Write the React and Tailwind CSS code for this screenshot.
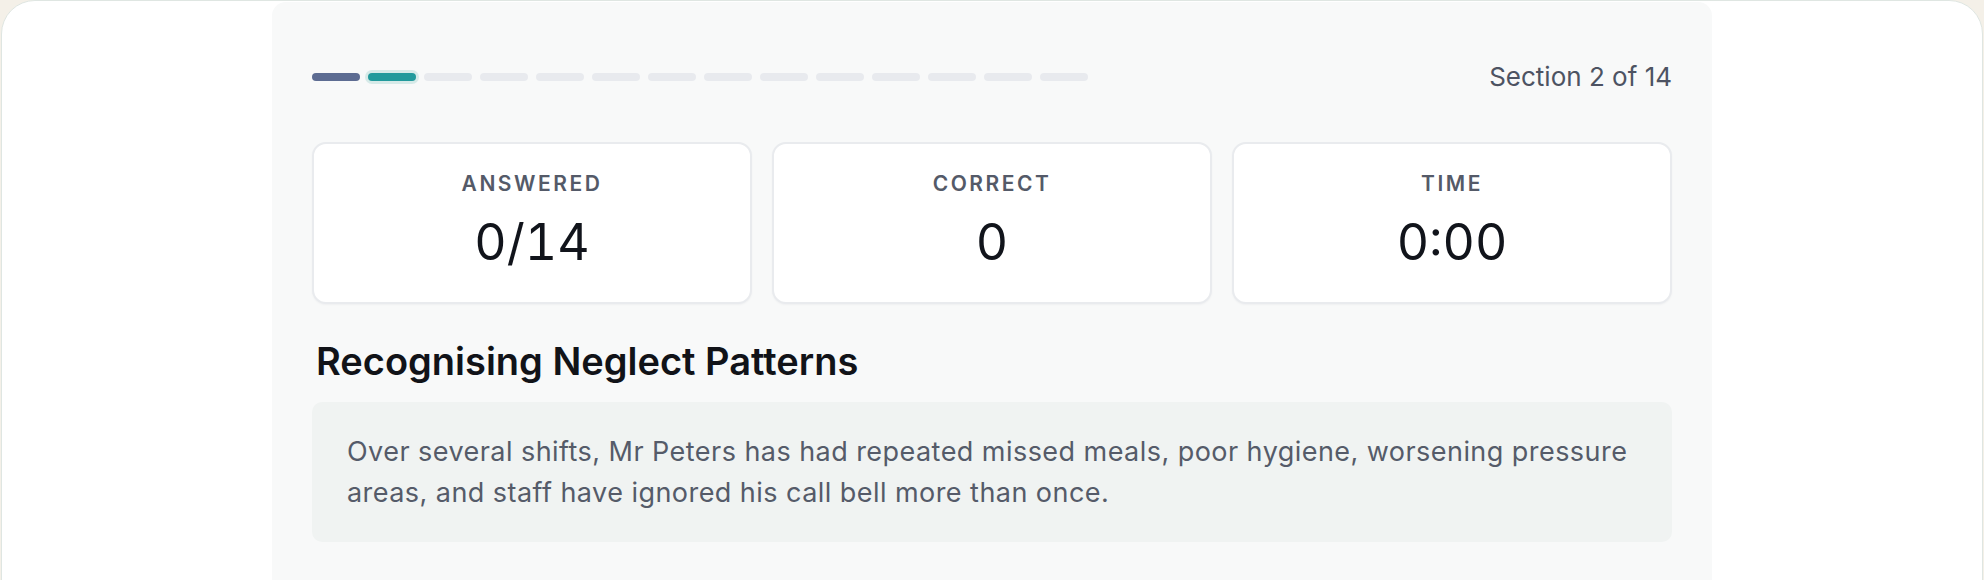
import React from "react";

const TOTAL = 14;
const CURRENT = 2;

const stats = [
  { label: "ANSWERED", value: "0/14" },
  { label: "CORRECT", value: "0" },
  { label: "TIME", value: "0:00" },
];

function ProgressSegments() {
  return (
    <div className="flex items-center gap-[8px]">
      {Array.from({ length: TOTAL }).map((_, i) => {
        const n = i + 1;
        if (n < CURRENT) {
          return <div key={i} className="h-[8px] w-[48px] rounded-full bg-[#5d6c92]" />;
        }
        if (n === CURRENT) {
          return (
            <div
              key={i}
              className="h-[8px] w-[48px] rounded-full bg-[#229a9c] ring-[3px] ring-[#d6eae8]"
            />
          );
        }
        return <div key={i} className="h-[8px] w-[48px] rounded-full bg-[#e8eaee]" />;
      })}
    </div>
  );
}

function StatCard({ label, value }) {
  return (
    <div className="flex h-[162px] flex-col items-center rounded-[14px] border-2 border-[#e9ebee] bg-white pt-[26px] shadow-[0_1px_2px_rgba(16,24,40,0.04)]">
      <div className="text-[21px] font-semibold leading-[28px] tracking-[0.12em] text-[#545a68]">
        {label}
      </div>
      <div className="mt-[14px] text-[50px] font-normal leading-[60px] tabular-nums text-[#11141b]">
        {value}
      </div>
    </div>
  );
}

export default function App() {
  return (
    <div
      className="min-h-screen bg-[#f4f0e8] px-px"
      style={{ fontFamily: "Inter, 'Noto Sans', sans-serif" }}
    >
      <div className="h-[600px] overflow-hidden rounded-t-[34px] border border-[#dfe6e2] bg-white">
        <div className="mx-auto mt-px w-[1440px] rounded-t-[14px] bg-[#f8f9f9] px-[40px] pt-[57px] pb-[40px]">
          <div className="flex h-[36px] items-center justify-between">
            <ProgressSegments />
            <div className="text-[26px] leading-[36px] text-[#4d5362]">
              Section {CURRENT} of {TOTAL}
            </div>
          </div>

          <div className="mt-[47px] grid grid-cols-3 gap-[20px]">
            {stats.map((s) => (
              <StatCard key={s.label} label={s.label} value={s.value} />
            ))}
          </div>

          <h2 className="mt-[35px] pl-[4px] text-[38px] font-semibold leading-[45px] text-[#111318]">
            Recognising Neglect Patterns
          </h2>

          <div className="mt-[18px] rounded-[10px] bg-[#f0f3f2] py-[29px] pl-[35px] pr-[8px] text-[27px] leading-[41px] tracking-[0.45px] text-[#555b69]">
            Over several shifts, Mr Peters has had repeated missed meals, poor hygiene, worsening
            pressure
            <br />
            areas, and staff have ignored his call bell more than once.
          </div>
        </div>
      </div>
    </div>
  );
}
